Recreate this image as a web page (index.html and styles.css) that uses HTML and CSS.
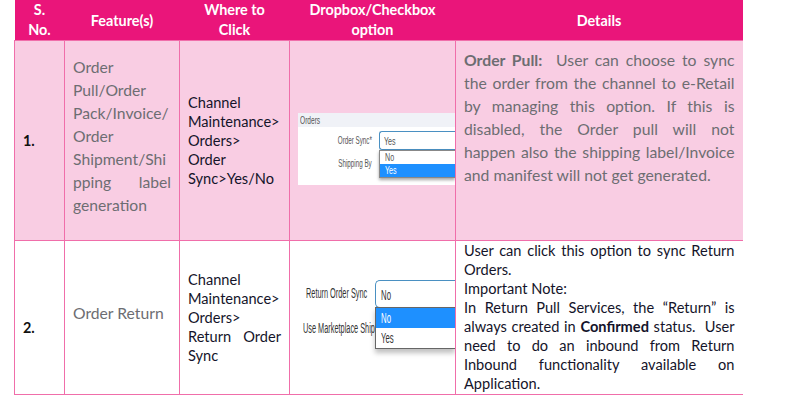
FILE: index.html
```html
<!DOCTYPE html>
<html lang="en">
<head>
<meta charset="utf-8">
<title>Channel sync options</title>
<link rel="stylesheet" href="styles.css">
</head>
<body>
<table class="sheet">
<colgroup>
<col class="c-no"><col class="c-feature"><col class="c-where"><col class="c-option"><col class="c-details">
</colgroup>
<thead>
<tr class="head">
<th>S.<br>No.</th><th><span class="head-one">Feature(s)</span></th><th>Where to<br>Click</th><th>Dropbox/Checkbox<br>option</th><th><span class="head-one">Details</span></th>
</tr>
</thead>
<tbody>
<tr class="row-one">
<td class="no">1.</td>
<td class="feature">Order Pull/Order Pack/Invoice/ Order Shipment/Shi<wbr>pping label generation</td>
<td class="where">Channel Maintenance&gt;<br>Orders&gt;<br>Order Sync&gt;Yes/No</td>
<td class="option">
<div class="shot-a">
<div class="band"><span class="squeeze-l">Orders</span></div>
<div class="form-a">
<div class="labels-a"><span class="squeeze-r">Order Sync*</span><span class="squeeze-r">Shipping By</span></div>
<div class="select-a"><span class="squeeze-t">Yes</span>
<div class="menu-a"><div class="opt-a"><span class="squeeze-t">No</span></div><div class="opt-a active"><span class="squeeze-t">Yes</span></div></div>
</div>
</div>
</div>
</td>
<td class="details-one"><b>Order Pull:</b>&nbsp; User can choose to sync the order from the channel to e-Retail by managing this option. If this is disabled, the Order pull will not happen also the shipping label/Invoice and manifest will not get generated.</td>
</tr>
<tr class="row-two">
<td class="no no-low">2.</td>
<td class="feature">Order Return</td>
<td class="where">Channel Maintenance&gt;<br>Orders&gt;<br>Return Order Sync</td>
<td class="option">
<div class="shot-b">
<div class="labels-b"><span class="squeeze-b label-top">Return Order Sync</span><span class="squeeze-b label-low">Use Marketplace Ship</span></div>
<div class="select-b"><span class="squeeze-s">No</span>
<div class="menu-b"><div class="opt-b active"><span class="squeeze-s">No</span></div><div class="opt-b"><span class="squeeze-s">Yes</span></div></div>
</div>
</div>
</td>
<td class="details-two">User can click this option to sync Return Orders.<br>Important Note:<br>In Return Pull Services, the “Return” is always created in <b>Confirmed</b> status.&nbsp; User need to do an inbound from Return Inbound functionality available on Application.</td>
</tr>
</tbody>
</table>
</body>
</html>
```
FILE: styles.css
```css
html, body { margin: 0; padding: 0; background: #fff; }
body { width: 808px; height: 402px; overflow: hidden; font-family: "Lato", "Liberation Sans", sans-serif; }
.sheet { margin-left: 14px; width: 728px; table-layout: fixed; border-collapse: collapse; }
.c-no { width: 50px; }
.c-feature { width: 115px; }
.c-where { width: 110px; }
.c-option { width: 166px; }
.c-details { width: 287px; }
.head { height: 40px; background: #ea157a; color: #fff; }
.head th { padding: 0 2px; font-size: 14.4px; line-height: 19.5px; font-weight: 700; text-align: center; vertical-align: middle; }
.head-one { display: block; padding-top: 2px; }
td { border: 1px solid #f06eaa; padding: 0 8px; vertical-align: middle; text-align: justify; }
.row-one { height: 200px; background: #f9cde3; }
.row-two { height: 154px; background: #fff; }
.no { font-size: 14.4px; font-weight: 700; color: #111; }
.no-low { padding-top: 20px; }
.feature { font-size: 15.7px; line-height: 23px; color: #6d6d72; overflow-wrap: anywhere; padding-bottom: 8px; }
.where { font-size: 14.6px; line-height: 19px; color: #14142a; }
.option { padding: 0 0 0 8px; overflow: hidden; }
.details-one { font-size: 15.75px; line-height: 23px; color: #6d6d72; vertical-align: top; padding-top: 7px; border-right: 0; }
.details-two { font-size: 14.6px; line-height: 19px; color: #14142a; border-right: 0; }
.squeeze-l, .squeeze-r, .squeeze-t, .squeeze-b, .squeeze-s { display: inline-block; white-space: nowrap; }
.squeeze-l { transform: scaleX(.6); transform-origin: left center; }
.squeeze-r { transform: scaleX(.57); transform-origin: right center; }
.squeeze-t { transform: scaleX(.62); transform-origin: left center; }
.squeeze-b { transform: scaleX(.525); transform-origin: left center; }
.squeeze-s { transform: scaleX(.52); transform-origin: left center; }
.shot-a { height: 72px; margin-top: 17px; background: #fff; font-family: "Liberation Sans", sans-serif; color: #555; position: relative; overflow: hidden; }
.band { height: 14px; background: #f0f2f7; font-size: 11px; line-height: 14px; padding-left: 2px; }
.form-a { display: flex; padding-top: 4px; }
.labels-a { width: 74px; flex: none; display: flex; flex-direction: column; align-items: flex-end; gap: 13px; padding-top: 4px; font-size: 11px; line-height: 10px; }
.select-a { position: relative; margin-left: 7px; flex: 1; height: 19px; box-sizing: border-box; border: 1px solid #4a90c2; border-right: 0; border-radius: 3px 0 0 3px; padding: 3px 0 0 4px; font-size: 11.5px; line-height: 13px; }
.menu-a { position: absolute; left: -1px; right: 0; top: 18px; background: #fff; border: 1px solid #888; border-right: 0; box-shadow: 0 2px 3px rgba(0,0,0,.35); }
.opt-a { height: 13px; line-height: 13px; padding-left: 5px; }
.opt-a.active, .opt-b.active { background: #1e90ff; color: #fff; }
.shot-b { height: 152px; display: flex; font-family: "Liberation Sans", sans-serif; color: #333; position: relative; }
.labels-b { width: 77px; flex: none; display: flex; flex-direction: column; align-items: flex-start; gap: 20px; padding-top: 45px; font-size: 14px; line-height: 15px; }
.label-top { margin-left: 8px; }
.label-low { margin-left: 5px; }
.select-b { position: relative; flex: 1; height: 28px; margin-top: 39px; box-sizing: border-box; background: #fff; border: 1px solid #4a90c2; border-right: 0; border-radius: 5px 0 0 5px; padding: 6px 0 0 5px; font-size: 15px; line-height: 16px; }
.menu-b { position: absolute; left: -1px; right: 0; top: 26px; background: #fff; border: 1px solid #666; border-right: 0; box-shadow: 0 4px 5px rgba(0,0,0,.25); }
.opt-b { height: 20px; line-height: 20px; padding-left: 5px; }
```
